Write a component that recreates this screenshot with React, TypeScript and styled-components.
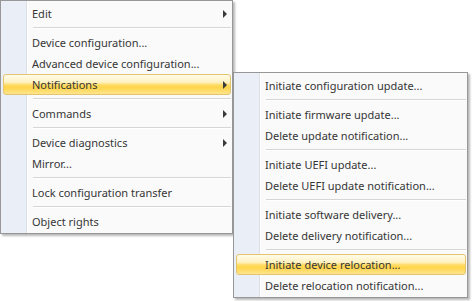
import styled, { createGlobalStyle } from "styled-components";

interface Entry {
    label?: string
    sub?: boolean
    active?: boolean
    sep?: boolean
}

const GlobalStyle = createGlobalStyle`
    html, body {
        margin: 0;
        padding: 0;
        background: #ffffff;
    }
    body {
        font-family: "Noto Sans", "Open Sans", sans-serif;
        font-size: 11px;
        color: #363636;
    }
`

const mainItems: Entry[] = [
    { label: 'Edit', sub: true },
    { sep: true },
    { label: 'Device configuration...' },
    { label: 'Advanced device configuration...' },
    { label: 'Notifications', sub: true, active: true },
    { sep: true },
    { label: 'Commands', sub: true },
    { sep: true },
    { label: 'Device diagnostics', sub: true },
    { label: 'Mirror...' },
    { sep: true },
    { label: 'Lock configuration transfer' },
    { sep: true },
    { label: 'Object rights' },
]

const subItems: Entry[] = [
    { label: 'Initiate configuration update...' },
    { sep: true },
    { label: 'Initiate firmware update...' },
    { label: 'Delete update notification...' },
    { sep: true },
    { label: 'Initiate UEFI update...' },
    { label: 'Delete UEFI update notification...' },
    { sep: true },
    { label: 'Initiate software delivery...' },
    { label: 'Delete delivery notification...' },
    { sep: true },
    { label: 'Initiate device relocation...', active: true },
    { label: 'Delete relocation notification...' },
]

const renderEntries = (entries: Entry[]) =>
    entries.map((e, i) =>
        e.sep
            ? <Separator key={i} />
            : (
                <Item key={i} $active={e.active}>
                    <span>{e.label}</span>
                    {e.sub && <Arrow />}
                </Item>
            )
    )

const App = () => {
    return (
        <>
            <GlobalStyle />
            <Page>
                <Menu $width={233}>
                    {renderEntries(mainItems)}
                </Menu>
                <SubMenu $width={235}>
                    {renderEntries(subItems)}
                </SubMenu>
            </Page>
        </>
    );
}

export default App;

const Page = styled.div`
    position: relative;
    width: 472px;
    height: 301px;
    overflow: hidden;
`

const Menu = styled.div<{ $width: number }>`
    box-sizing: border-box;
    width: ${({ $width }) => $width}px;
    display: flex;
    flex-direction: column;
    padding: 2px 1px 1px 2px;
    border: 1px solid #979797;
    background: linear-gradient(to right,
        #e9eef7 0 25px,
        #dcdfe3 25px 26px,
        #ffffff 26px 27px,
        #fafafa 27px);
    box-shadow: 2px 2px 2px rgba(0, 0, 0, 0.28);
`

const SubMenu = styled(Menu)`
    position: absolute;
    left: 233px;
    top: 72px;
`

const Item = styled.div<{ $active?: boolean }>`
    box-sizing: border-box;
    height: 21px;
    display: flex;
    align-items: center;
    padding: 0 3px 0 28px;
    border: 1px solid ${({ $active }) => $active ? '#e3c46f' : 'transparent'};
    border-radius: 3px;
    white-space: nowrap;
    background: ${({ $active }) => $active
        ? 'linear-gradient(#fffbe9 0%, #fff2c2 38%, #ffdc66 52%, #ffd54a 66%, #ffe48f 100%)'
        : 'transparent'};

    span {
        line-height: 19px;
    }
`

const Arrow = styled.i`
    margin-left: auto;
    width: 0;
    height: 0;
    border-top: 4px solid transparent;
    border-bottom: 4px solid transparent;
    border-left: 4px solid #3a3a3a;
`

const Separator = styled.div`
    height: 8px;
    box-sizing: border-box;
    padding-top: 3px;
    margin-left: 30px;

    &::before {
        content: '';
        display: block;
        height: 1px;
        background: #d6d6d6;
        border-bottom: 1px solid #ffffff;
    }
`
